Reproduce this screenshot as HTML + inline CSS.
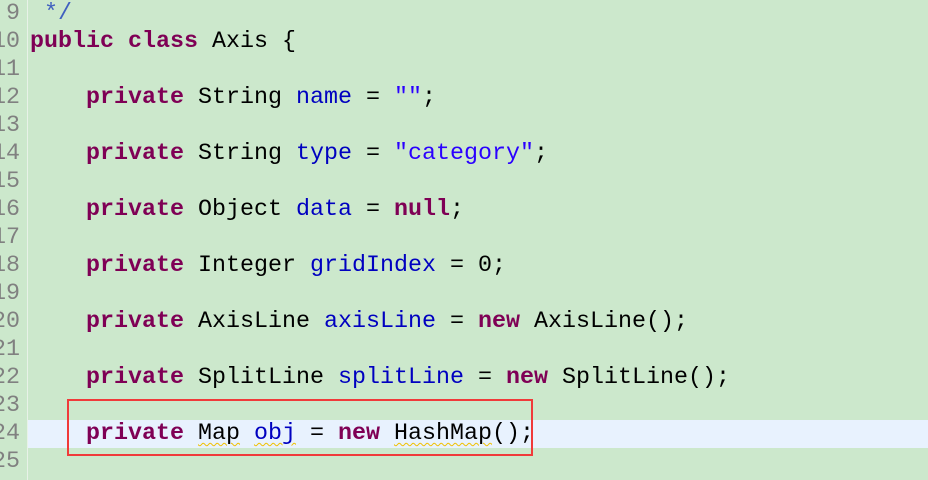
<!DOCTYPE html>
<html><head><meta charset="utf-8"><style>
body{margin:0;width:928px;height:480px;overflow:hidden;background:#cce8cc;font-family:"Liberation Mono",monospace;font-size:23.33px;}
.ln{position:absolute;left:0;width:928px;height:28px;line-height:28px;white-space:pre;}
.num{position:absolute;right:908px;color:#808080;}
.code{position:absolute;left:30px;color:#000;}
.k{color:#7f0055;font-weight:bold}
.f{color:#0000c0}
.s{color:#2a00ff}
.c{color:#3f5fbf}
.gut{position:absolute;left:27px;top:0;width:1px;height:480px;background:#e8f2e8}
.hl{position:absolute;left:28px;top:420px;width:900px;height:28px;background:#e8f2fe}
.box{position:absolute;left:67px;top:399px;width:462px;height:53px;border:2px solid #f03a3a}
.w{text-decoration:underline wavy #f0c000;text-decoration-thickness:1px;text-underline-offset:3px}
</style></head><body>
<div class="hl"></div>
<div class="gut"></div>
<div class="ln" style="top:0"><span class="num">9</span><span class="code"> <span class="c">*/</span></span></div>
<div class="ln" style="top:28px"><span class="num">10</span><span class="code"><span class="k">public class</span> Axis {</span></div>
<div class="ln" style="top:56px"><span class="num">11</span></div>
<div class="ln" style="top:84px"><span class="num">12</span><span class="code">    <span class="k">private</span> String <span class="f">name</span> = <span class="s">""</span>;</span></div>
<div class="ln" style="top:112px"><span class="num">13</span></div>
<div class="ln" style="top:140px"><span class="num">14</span><span class="code">    <span class="k">private</span> String <span class="f">type</span> = <span class="s">"category"</span>;</span></div>
<div class="ln" style="top:168px"><span class="num">15</span></div>
<div class="ln" style="top:196px"><span class="num">16</span><span class="code">    <span class="k">private</span> Object <span class="f">data</span> = <span class="k">null</span>;</span></div>
<div class="ln" style="top:224px"><span class="num">17</span></div>
<div class="ln" style="top:252px"><span class="num">18</span><span class="code">    <span class="k">private</span> Integer <span class="f">gridIndex</span> = 0;</span></div>
<div class="ln" style="top:280px"><span class="num">19</span></div>
<div class="ln" style="top:308px"><span class="num">20</span><span class="code">    <span class="k">private</span> AxisLine <span class="f">axisLine</span> = <span class="k">new</span> AxisLine();</span></div>
<div class="ln" style="top:336px"><span class="num">21</span></div>
<div class="ln" style="top:364px"><span class="num">22</span><span class="code">    <span class="k">private</span> SplitLine <span class="f">splitLine</span> = <span class="k">new</span> SplitLine();</span></div>
<div class="ln" style="top:392px"><span class="num">23</span></div>
<div class="ln" style="top:420px"><span class="num">24</span><span class="code">    <span class="k">private</span> <span class="w">Map</span> <span class="f w">obj</span> = <span class="k">new</span> <span class="w">HashMap</span>();</span></div>
<div class="ln" style="top:448px"><span class="num">25</span></div>
<div class="box"></div>
</body></html>
